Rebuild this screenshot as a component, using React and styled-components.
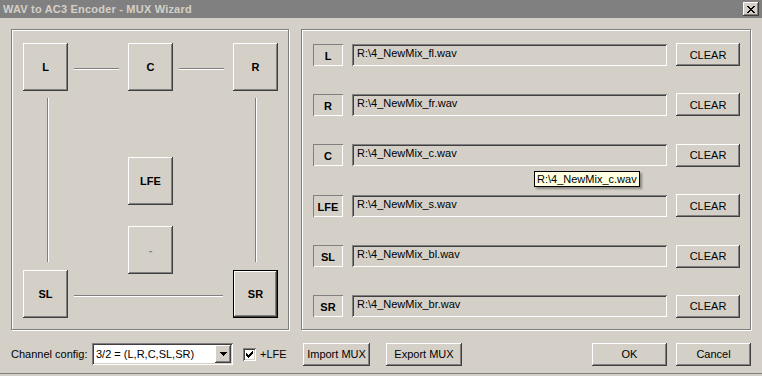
import React from 'react';
import styled, { createGlobalStyle, css } from 'styled-components';

const GlobalStyle = createGlobalStyle`
  html, body {
    margin: 0;
    padding: 0;
    background: #d4d0c8;
  }
  body {
    font-family: "Liberation Sans", Arial, sans-serif;
    font-size: 11px;
    color: #000;
  }
`;

const raised = css`
  background: #d4d0c8;
  box-shadow: inset -1px -1px 0 #404040, inset 1px 1px 0 #fff,
    inset -2px -2px 0 #808080, inset 2px 2px 0 #d4d0c8;
`;

const sunken = css`
  box-shadow: inset 1px 1px 0 #808080, inset -1px -1px 0 #fff,
    inset 2px 2px 0 #404040, inset -2px -2px 0 #d4d0c8;
`;

const etched = css`
  border: 1px solid #808080;
  box-shadow: inset 1px 1px 0 #fff, 1px 1px 0 #fff;
`;

const Window = styled.div`
  position: relative;
  width: 762px;
  height: 374px;
  box-sizing: border-box;
  display: flex;
  flex-direction: column;
  background: #d4d0c8;
  border-bottom: 1px solid #808080;
`;

const TitleBar = styled.div`
  height: 18px;
  flex: none;
  display: flex;
  align-items: center;
  justify-content: space-between;
  padding: 0 3px;
  background: #808080;
`;

const Title = styled.span`
  font-weight: bold;
  font-size: 11px;
  color: #d4d0c8;
  letter-spacing: 0.2px;
`;

const CloseButton = styled.div`
  ${raised};
  width: 16px;
  height: 14px;
  display: flex;
  align-items: center;
  justify-content: center;
`;

const Content = styled.div`
  flex: 1;
  display: flex;
  flex-direction: column;
  padding: 11px 11px 0 11px;
`;

const Main = styled.div`
  display: flex;
  gap: 12px;
  height: 301px;
`;

const SpeakerGroup = styled.div`
  ${etched};
  position: relative;
  width: 278px;
  box-sizing: border-box;
  flex: none;
`;

const Speaker = styled.div`
  ${raised};
  position: absolute;
  left: ${(p) => p.$x}px;
  top: ${(p) => p.$y}px;
  width: 45px;
  height: 48px;
  box-sizing: border-box;
  display: flex;
  align-items: center;
  justify-content: center;
  font-weight: bold;
  color: ${(p) => (p.$dim ? '#808080' : '#000')};
  ${(p) =>
    p.$default &&
    css`
      border: 1px solid #000;
    `}
`;

const HLine = styled.div`
  position: absolute;
  left: ${(p) => p.$x}px;
  top: ${(p) => p.$y}px;
  width: ${(p) => p.$len}px;
  height: 1px;
  background: #808080;
  border-bottom: 1px solid #fff;
`;

const VLine = styled.div`
  position: absolute;
  left: ${(p) => p.$x}px;
  top: ${(p) => p.$y}px;
  height: ${(p) => p.$len}px;
  width: 1px;
  background: #808080;
  border-right: 1px solid #fff;
`;

const FileGroup = styled.div`
  ${etched};
  flex: 1;
  box-sizing: border-box;
  display: flex;
  flex-direction: column;
  justify-content: space-between;
  padding: 13px 9px 11px 11px;
`;

const Row = styled.div`
  display: flex;
  align-items: center;
  gap: 9px;
  height: 23px;
`;

const ChannelTag = styled.div`
  width: 30px;
  height: 22px;
  box-sizing: border-box;
  box-shadow: inset 1px 1px 0 #808080, inset -1px -1px 0 #fff;
  display: flex;
  align-items: center;
  justify-content: center;
  padding-top: 2px;
  font-weight: bold;
`;

const PathField = styled.div`
  ${sunken};
  width: 315px;
  height: 22px;
  box-sizing: border-box;
  padding: 3px 5px;
  white-space: nowrap;
`;

const Button = styled.div`
  ${raised};
  width: ${(p) => p.$w}px;
  height: 23px;
  margin-left: ${(p) => p.$ml || 0}px;
  box-sizing: border-box;
  display: flex;
  align-items: center;
  justify-content: center;
  flex: none;
`;

const BottomBar = styled.div`
  display: flex;
  align-items: center;
  gap: 12px;
  margin-top: 12px;
  height: 24px;
`;

const ConfigPane = styled.div`
  width: 280px;
  flex: none;
  display: flex;
  align-items: center;
`;

const ActionPane = styled.div`
  flex: 1;
  display: flex;
  align-items: center;
`;

const Spacer = styled.div`
  flex: 1;
`;

const Caption = styled.span`
  width: ${(p) => (p.$w ? `${p.$w}px` : 'auto')};
  margin-left: ${(p) => p.$ml || 0}px;
  flex: none;
  white-space: nowrap;
`;

const Combo = styled.div`
  ${sunken};
  background: #fff;
  width: 141px;
  height: 22px;
  flex: none;
  box-sizing: border-box;
  display: flex;
  align-items: center;
  padding: 2px 2px 2px 4px;
`;

const ComboText = styled.span`
  flex: 1;
  white-space: nowrap;
`;

const ComboArrow = styled.div`
  ${raised};
  width: 16px;
  height: 18px;
  display: flex;
  align-items: center;
  justify-content: center;
`;

const CheckBox = styled.div`
  ${sunken};
  background: #fff;
  margin-left: 10px;
  width: 13px;
  height: 13px;
  flex: none;
  display: flex;
  align-items: center;
  justify-content: center;
`;

const Tooltip = styled.div`
  position: absolute;
  left: 534px;
  top: 171px;
  height: 16px;
  box-sizing: border-box;
  padding: 1px 2px;
  background: #ffffe1;
  border: 1px solid #000;
  box-shadow: 2px 2px 2px rgba(0, 0, 0, 0.35);
  white-space: nowrap;
`;

const channels = [
  { tag: 'L', file: 'R:\\4_NewMix_fl.wav' },
  { tag: 'R', file: 'R:\\4_NewMix_fr.wav' },
  { tag: 'C', file: 'R:\\4_NewMix_c.wav' },
  { tag: 'LFE', file: 'R:\\4_NewMix_s.wav' },
  { tag: 'SL', file: 'R:\\4_NewMix_bl.wav' },
  { tag: 'SR', file: 'R:\\4_NewMix_br.wav' },
];

// speaker diagram, offsets inside the group box
const speakers = [
  { name: 'L', x: 11, y: 13 },
  { name: 'C', x: 116, y: 13 },
  { name: 'R', x: 221, y: 13 },
  { name: 'LFE', x: 116, y: 127 },
  { name: '-', x: 116, y: 196, dim: true },
  { name: 'SL', x: 11, y: 240 },
  { name: 'SR', x: 221, y: 240, isDefault: true },
];

const CloseIcon = () => (
  <svg width="8" height="7" viewBox="0 0 8 7" shapeRendering="crispEdges">
    <path
      d="M0 0h2v1h-2zM6 0h2v1h-2zM1 1h2v1h-2zM5 1h2v1h-2zM2 2h4v1h-4zM3 3h2v1h-2zM2 4h4v1h-4zM1 5h2v1h-2zM5 5h2v1h-2zM0 6h2v1h-2zM6 6h2v1h-2z"
      fill="#000"
    />
  </svg>
);

const ArrowIcon = () => (
  <svg width="7" height="4" viewBox="0 0 7 4" shapeRendering="crispEdges">
    <path d="M0 0h7v1h-7zM1 1h5v1h-5zM2 2h3v1h-3zM3 3h1v1h-1z" fill="#000" />
  </svg>
);

const CheckIcon = () => (
  <svg width="7" height="7" viewBox="0 0 7 7" shapeRendering="crispEdges">
    <path
      d="M6 0h1v3h-1zM5 1h1v3h-1zM4 2h1v3h-1zM3 3h1v3h-1zM2 4h1v3h-1zM1 3h1v3h-1zM0 2h1v3h-1z"
      fill="#000"
    />
  </svg>
);

const App = () => {
  return (
    <>
      <GlobalStyle />
      <Window>
        <TitleBar>
          <Title>WAV to AC3 Encoder - MUX Wizard</Title>
          <CloseButton>
            <CloseIcon />
          </CloseButton>
        </TitleBar>

        <Content>
          <Main>
            <SpeakerGroup>
              <HLine $x={62} $y={38} $len={45} />
              <HLine $x={167} $y={38} $len={45} />
              <VLine $x={35} $y={68} $len={164} />
              <VLine $x={243} $y={68} $len={164} />
              <HLine $x={62} $y={265} $len={149} />
              {speakers.map((s) => (
                <Speaker
                  key={s.name}
                  $x={s.x}
                  $y={s.y}
                  $dim={s.dim}
                  $default={s.isDefault}
                >
                  {s.name}
                </Speaker>
              ))}
            </SpeakerGroup>

            <FileGroup>
              {channels.map((c) => (
                <Row key={c.tag}>
                  <ChannelTag>{c.tag}</ChannelTag>
                  <PathField>{c.file}</PathField>
                  <Button $w={64}>CLEAR</Button>
                </Row>
              ))}
            </FileGroup>
          </Main>

          <BottomBar>
            <ConfigPane>
              <Caption $w={81}>Channel config:</Caption>
              <Combo>
                <ComboText>3/2 = (L,R,C,SL,SR)</ComboText>
                <ComboArrow>
                  <ArrowIcon />
                </ComboArrow>
              </Combo>
              <CheckBox>
                <CheckIcon />
              </CheckBox>
              <Caption $ml={4}>+LFE</Caption>
            </ConfigPane>

            <ActionPane>
              <Button $w={67}>Import MUX</Button>
              <Button $w={76} $ml={16}>Export MUX</Button>
              <Spacer />
              <Button $w={75}>OK</Button>
              <Button $w={75} $ml={9}>Cancel</Button>
            </ActionPane>
          </BottomBar>
        </Content>

        <Tooltip>R:\4_NewMix_c.wav</Tooltip>
      </Window>
    </>
  );
};

export default App;
